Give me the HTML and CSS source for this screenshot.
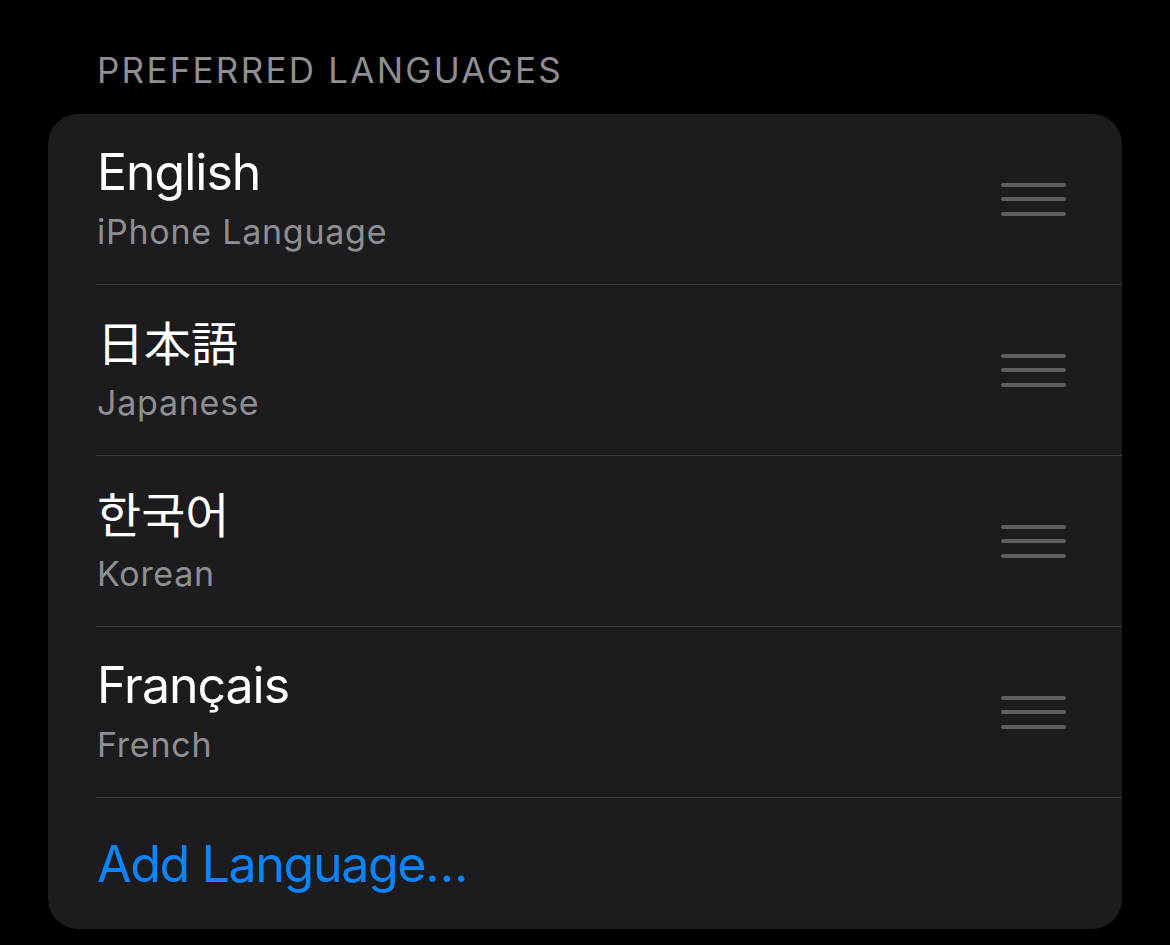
FILE: index.html
```html
<!DOCTYPE html>
<html lang="en">
<head>
<meta charset="utf-8">
<title>Preferred Languages</title>
<link rel="stylesheet" href="styles.css">
</head>
<body>
<main class="page">
  <h2 class="section-header">PREFERRED LANGUAGES</h2>
  <section class="card">
    <div class="row">
      <div class="text">
        <div class="title">English</div>
        <div class="subtitle">iPhone Language</div>
      </div>
      <div class="handle"><span></span><span></span><span></span></div>
    </div>
    <div class="row">
      <div class="text">
        <div class="title cjk-ja" lang="ja">日本語</div>
        <div class="subtitle">Japanese</div>
      </div>
      <div class="handle"><span></span><span></span><span></span></div>
    </div>
    <div class="row">
      <div class="text">
        <div class="title cjk-ko" lang="ko">한국어</div>
        <div class="subtitle">Korean</div>
      </div>
      <div class="handle"><span></span><span></span><span></span></div>
    </div>
    <div class="row">
      <div class="text">
        <div class="title" lang="fr">Français</div>
        <div class="subtitle">French</div>
      </div>
      <div class="handle"><span></span><span></span><span></span></div>
    </div>
    <div class="add-row">
      <span class="add-link">Add Language…</span>
    </div>
  </section>
</main>
</body>
</html>
```

FILE: styles.css
```css
html, body {
  margin: 0;
  padding: 0;
  background: #000;
}

body {
  font-family: Inter, "Noto Sans", "Noto Sans CJK JP", "Noto Sans CJK KR", sans-serif;
  color: #fff;
  width: 1170px;
  height: 945px;
  overflow: hidden;
}

.page {
  padding: 48px 48px 0 48px;
}

.section-header {
  margin: 0 0 22px 49px;
  font-size: 35px;
  line-height: 44px;
  font-weight: 400;
  color: #8e8e93;
  letter-spacing: 2.25px;
}

.card {
  background: #1c1c1e;
  border-radius: 30px;
  padding-left: 48px;
  overflow: hidden;
}

.row {
  height: 170px;
  border-bottom: 1px solid #3a3a3c;
  display: flex;
  align-items: center;
  justify-content: space-between;
  padding-right: 56px;
}

.text {
  display: flex;
  flex-direction: column;
  padding-left: 1px;
  padding-bottom: 4px;
}

.title {
  font-size: 50px;
  line-height: 60px;
  letter-spacing: -1px;
  color: #fff;
}

.cjk-ja,
.cjk-ko {
  letter-spacing: 0;
  margin-top: -2px;
  margin-bottom: 2px;
}

.cjk-ja {
  font-family: "Noto Sans CJK JP", sans-serif;
  font-size: 47px;
}

.cjk-ko {
  font-family: "Noto Sans CJK KR", sans-serif;
  font-size: 48px;
}

.subtitle {
  margin-top: 10px;
  font-size: 34px;
  line-height: 40px;
  letter-spacing: 0.75px;
  color: #8e8e93;
}

.handle {
  width: 65px;
  display: flex;
  flex-direction: column;
  gap: 10.5px;
}

.handle span {
  display: block;
  height: 4px;
  border-radius: 2px;
  background: #5f5f63;
}

.add-row {
  height: 131px;
  display: flex;
  align-items: center;
  padding-left: 1px;
}

.add-link {
  font-size: 50px;
  line-height: 60px;
  letter-spacing: -1.3px;
  color: #0a84ff;
}
```
